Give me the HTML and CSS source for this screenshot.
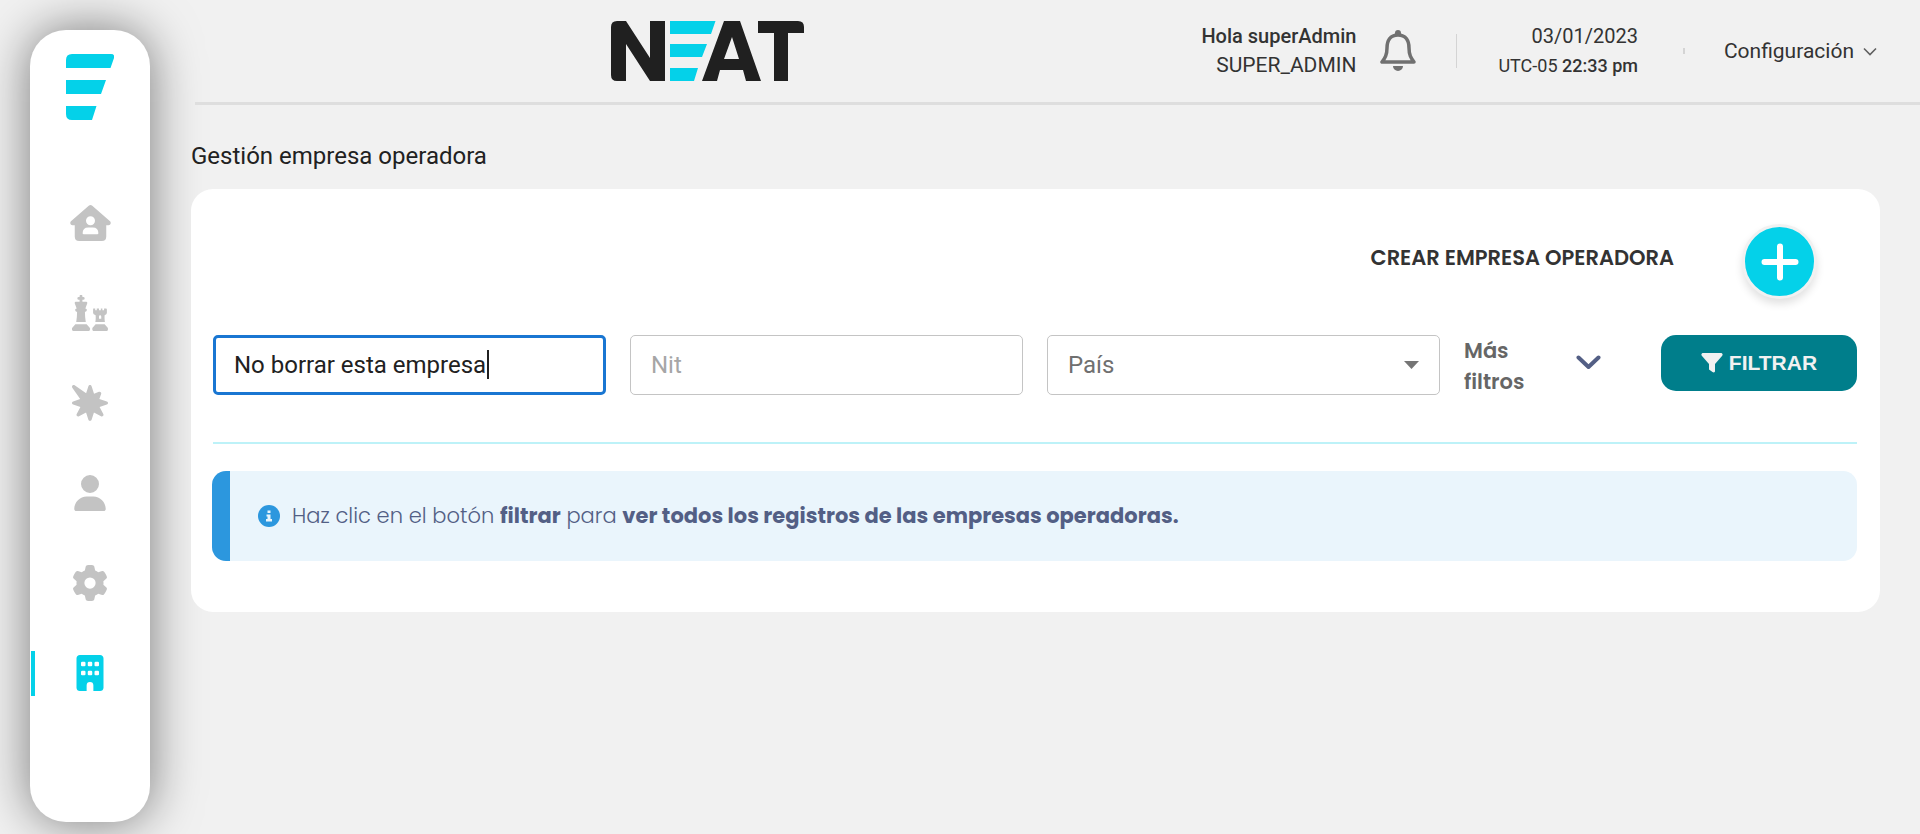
FILE: index.html
```html
<!DOCTYPE html>
<html lang="es">
<head>
<meta charset="utf-8">
<meta name="viewport" content="width=device-width, initial-scale=1">
<title>NEAT - Gestión empresa operadora</title>
<link rel="stylesheet" href="styles.css">
</head>
<body>
<div class="app">
  <aside class="sidebar">
    <a class="sidebar-logo" href="#" aria-label="Inicio">
      <svg width="48" height="66" viewBox="0 0 48 66" fill="currentColor"><path d="M6 0H45Q49 0 48 4L44.500 14H0V6Q0 0 6 0ZM0 26H40L35 40H0ZM0 52H30.500L26 66H6Q0 66 0 60Z"/></svg>
    </a>
    <nav class="menu" aria-label="Principal">
      <a class="menu-item" href="#" aria-label="Casa">
        <svg width="41" height="36" viewBox="0 0 576 512" fill="currentColor" fill-rule="evenodd"><path d="M309 8Q288-8 267 8L10 231C-10 252 2 287 32 287H64V448Q64 512 128 512H448Q512 512 512 448V287H544C574 287 586 252 566 231ZM288 160A64 64 0 1 1 288 288A64 64 0 1 1 288 160ZM176 400Q176 320 256 320H320Q400 320 400 400Q400 416 384 416H192Q176 416 176 400Z"/></svg>
      </a>
      <a class="menu-item" href="#" aria-label="Estrategia">
        <svg width="36" height="36" viewBox="0 0 512 512" fill="currentColor" fill-rule="evenodd"><path d="M148 16A20 20 0 0 0 108 16V28H96A20 20 0 0 0 96 68H108V96H54Q34 98 40 120L66 192Q44 194 44 214Q46 236 72 240Q72 310 60 384H196Q184 310 184 240Q210 236 212 214Q212 194 190 192L216 120Q222 98 202 96H148V68H160A20 20 0 0 0 160 28H148ZM48 416H208L252 464Q264 484 252 500Q246 512 232 512H24Q10 512 4 500Q-8 484 4 464ZM304 192H330V216H352V192H384V216H410V192H432V216H456V192H484Q496 192 496 208V256Q496 276 464 288Q460 336 468 384H332Q340 336 336 288Q300 276 300 256V208Q300 192 304 192ZM384 336H416V304A16 16 0 0 0 384 304ZM336 416H464L508 464Q516 484 508 500Q502 512 488 512H312Q298 512 292 500Q284 484 292 464Z"/></svg>
      </a>
      <a class="menu-item" href="#" aria-label="Novedades">
        <svg width="36" height="36" viewBox="0 0 512 512" fill="currentColor"><path d="M37.600 4.200C28-2.300 15.200-1.100 7 7s-9.400 21-2.800 30.500l112 163.300L16.600 233.200C6.700 236.400 0 245.600 0 256s6.700 19.600 16.600 22.800l103.100 33.400L66.800 412.800c-4.900 9.300-3.200 20.700 4.300 28.100s18.800 9.200 28.100 4.300l100.600-52.900 33.400 103.100c3.200 9.900 12.400 16.600 22.800 16.600s19.600-6.700 22.800-16.600l33.400-103.100 100.600 52.900c9.300 4.900 20.700 3.200 28.100-4.300s9.200-18.800 4.300-28.100L392.300 312.200l103.100-33.400c9.900-3.200 16.600-12.400 16.600-22.800s-6.700-19.600-16.600-22.800L388.900 198.700l25.700-70.400c3.200-8.800 1-18.600-5.600-25.200s-16.400-8.800-25.200-5.600l-70.400 25.700L278.800 16.600C275.600 6.700 266.400 0 256 0s-19.600 6.700-22.800 16.600l-32.300 99.600L37.600 4.200z"/></svg>
      </a>
      <a class="menu-item" href="#" aria-label="Usuarios">
        <svg width="32" height="36" viewBox="0 0 448 512" fill="currentColor"><path d="M224 256A128 128 0 1 0 224 0a128 128 0 1 0 0 256zm-45.700 48C79.800 304 0 383.800 0 482.300C0 498.700 13.300 512 29.700 512H418.300c16.400 0 29.700-13.300 29.700-29.700C448 383.800 368.200 304 269.700 304H178.300z"/></svg>
      </a>
      <a class="menu-item" href="#" aria-label="Ajustes">
        <svg width="36" height="36" viewBox="0 0 512 512" fill="currentColor"><path d="M495.900 166.600c3.200 8.700 .5 18.400-6.400 24.600l-43.300 39.400c1.100 8.300 1.700 16.800 1.700 25.400s-.6 17.100-1.700 25.400l43.300 39.400c6.900 6.200 9.600 15.900 6.400 24.600c-4.400 11.900-9.700 23.300-15.800 34.300l-4.700 8.100c-6.600 11-14 21.400-22.100 31.200c-5.900 7.200-15.700 9.600-24.500 6.800l-55.700-17.700c-13.400 10.300-28.200 18.900-44 25.400l-12.500 57.100c-2 9.100-9 16.300-18.200 17.800c-13.800 2.300-28 3.500-42.500 3.500s-28.700-1.200-42.500-3.500c-9.200-1.500-16.200-8.700-18.200-17.800l-12.500-57.100c-15.800-6.500-30.600-15.100-44-25.400L83.100 425.900c-8.800 2.800-18.600 .3-24.500-6.800c-8.100-9.800-15.500-20.200-22.100-31.200l-4.700-8.100c-6.100-11-11.400-22.400-15.800-34.300c-3.200-8.700-.5-18.400 6.400-24.600l43.300-39.400C64.600 273.100 64 264.600 64 256s.6-17.100 1.700-25.400L22.400 191.200c-6.900-6.200-9.600-15.900-6.400-24.600c4.400-11.900 9.700-23.300 15.800-34.300l4.700-8.100c6.600-11 14-21.400 22.100-31.200c5.900-7.200 15.700-9.600 24.500-6.800l55.700 17.700c13.400-10.300 28.200-18.900 44-25.400l12.500-57.100c2-9.100 9-16.300 18.200-17.800C227.300 1.200 241.500 0 256 0s28.700 1.200 42.500 3.500c9.200 1.500 16.200 8.700 18.200 17.800l12.500 57.100c15.800 6.500 30.600 15.100 44 25.400l55.700-17.700c8.800-2.800 18.600-.3 24.500 6.800c8.100 9.800 15.500 20.200 22.100 31.200l4.700 8.100c6.100 11 11.400 22.400 15.800 34.300zM256 336a80 80 0 1 0 0-160 80 80 0 1 0 0 160z"/></svg>
      </a>
      <a class="menu-item is-active" href="#" aria-label="Empresas" aria-current="page">
        <svg width="28" height="36" viewBox="0 0 384 512" fill="currentColor" fill-rule="evenodd"><path d="M48 0C21.500 0 0 21.500 0 48V464C0 490.500 21.500 512 48 512H144V432A48 48 0 0 1 240 432V512H336C362.500 512 384 490.500 384 464V48C384 21.500 362.500 0 336 0ZM80 96H112Q128 96 128 112V144Q128 160 112 160H80Q64 160 64 144V112Q64 96 80 96ZM176 96H208Q224 96 224 112V144Q224 160 208 160H176Q160 160 160 144V112Q160 96 176 96ZM272 96H304Q320 96 320 112V144Q320 160 304 160H272Q256 160 256 144V112Q256 96 272 96ZM80 224H112Q128 224 128 240V272Q128 288 112 288H80Q64 288 64 272V240Q64 224 80 224ZM176 224H208Q224 224 224 240V272Q224 288 208 288H176Q160 288 160 272V240Q160 224 176 224ZM272 224H304Q320 224 320 240V272Q320 288 304 288H272Q256 288 256 272V240Q256 224 272 224Z"/></svg>
      </a>
    </nav>
  </aside>

  <div class="page">
    <header class="topbar">
      <svg class="brand" width="193" height="60" viewBox="0 0 193 60" role="img" aria-label="NEAT">
        <g fill="#202020">
          <path d="M6 0H15L39 37V0H54V60H39L15 23V60H6Q0 60 0 54V6Q0 0 6 0Z"/>
          <path d="M113 0H129L150 60H135L132 49H109L106 60H91ZM121 16L113 38H128Z" fill-rule="evenodd"/>
          <path d="M147 0H187Q193 0 193 6V12H177V60H163V12H147Z"/>
        </g>
        <path fill="#04d1e9" d="M59 0H104.500L100 13H59ZM59 23H96L91 36H59ZM59 47H87L83 60H59Z"/>
      </svg>
      <div class="user">
        <div class="stack">
          <strong>Hola superAdmin</strong>
          <span class="role">SUPER_ADMIN</span>
        </div>
        <button class="bell" type="button" aria-label="Notificaciones">
          <svg width="36" height="42" viewBox="0 0 36 42"><path d="M18 5C10 5 7 11 7 18C7 25 5 28 2 32H34C31 28 29 25 29 18C29 11 26 5 18 5Z" fill="none" stroke="#707070" stroke-width="3.500" stroke-linejoin="round"/><path d="M15 5V3A3 3 0 0 1 21 3V5ZM13 36H23A5 5 0 0 1 13 36Z" fill="#707070"/></svg>
        </button>
      </div>
      <div class="clock stack">
        <span>03/01/2023</span>
        <span class="time">UTC-05 <strong>22:33 pm</strong></span>
      </div>
      <button class="settings" type="button">Configuración
        <svg width="14" height="9" viewBox="0 0 14 9" fill="none" stroke="#606060" stroke-width="1.600"><path d="M1 1.500L7 7.500L13 1.500"/></svg>
      </button>
    </header>

    <main class="content">
      <h1 class="title">Gestión empresa operadora</h1>
      <section class="card">
        <div class="create">
          <span id="create-label">CREAR EMPRESA OPERADORA</span>
          <button class="add" type="button" aria-labelledby="create-label">
            <svg width="38" height="38" viewBox="0 0 38 38" stroke="#fff" stroke-width="6" stroke-linecap="round"><path d="M19 3.500V34.500M3.500 19H34.500"/></svg>
          </button>
        </div>
        <form class="filters">
          <input class="field" type="text" aria-label="Nombre" value="No borrar esta empresa" autofocus>
          <input class="field" type="text" aria-label="Nit" placeholder="Nit">
          <select class="field select" aria-label="País"><option>País</option></select>
          <button class="more" type="button"><span>Más filtros</span>
            <svg width="25" height="15" viewBox="0 0 25 15" fill="none" stroke="#535f85" stroke-width="4" stroke-linecap="round" stroke-linejoin="round"><path d="M2.500 2.500L12.500 12L22.500 2.500"/></svg>
          </button>
          <button class="apply" type="button">
            <svg width="22" height="20" viewBox="0 0 22 20" fill="currentColor"><path d="M1.500 0H20.500Q22.500 1 21 3L14 11V18.500Q13 20 11.500 19L8 16.500V11L1 3Q-.5 1 1.500 0Z"/></svg>FILTRAR
          </button>
        </form>
        <div class="notice" role="status">
          <svg width="22" height="22" viewBox="0 0 22 22"><circle cx="11" cy="11" r="11" fill="#2c97de"/><path d="M9.500 5.500H12.500V8H9.500ZM8.500 9.500H12.500V14H14V16.500H8V14H9.500V11.500H8.500Z" fill="#eaf5fc"/></svg>
          <p>Haz clic en el botón <strong>filtrar</strong> para <strong>ver todos los registros de las empresas operadoras.</strong></p>
        </div>
      </section>
    </main>
  </div>
</div>
</body>
</html>
```
FILE: styles.css
```css
* { box-sizing: border-box; }
body {
  margin: 0;
  background: #f1f1f1;
  color: #333;
  font-family: Roboto, "Liberation Sans", sans-serif;
  font-size: 20px;
}
button { padding: 0; border: 0; background: none; font: inherit; color: inherit; cursor: pointer; }
svg { display: block; flex: none; }

.app { display: flex; min-height: 100vh; }

/* Sidebar */
.sidebar {
  flex: none;
  width: 120px;
  margin: 30px 41px 12px 30px;
  padding-top: 24px;
  background: #fff;
  border-radius: 36px;
  box-shadow: 0 0 50px rgba(0, 0, 0, .5);
}
.sidebar-logo { display: block; margin-left: 36px; color: #04d1e9; }
.menu { display: flex; flex-direction: column; gap: 45px; margin-top: 81px; padding: 0 1px; }
.menu-item {
  display: flex;
  align-items: center;
  justify-content: center;
  height: 45px;
  padding-bottom: 1px;
  color: #c3c3c3;
  border: 0 solid transparent;
  border-width: 0 4px;
}
.menu-item.is-active { color: #04d1e9; border-left-color: #04d1e9; }

/* Header */
.page { flex: 1; min-width: 0; }
.topbar {
  display: flex;
  align-items: center;
  height: 105px;
  margin-left: 4px;
  padding-right: 43px;
  border-bottom: 3px solid #dedede;
}
.brand { margin: 0 auto 0 416px; }
.stack { display: flex; flex-direction: column; line-height: 29px; text-align: right; }
.stack strong { font-weight: 500; }
.role { font-size: 21px; }
.user { display: flex; align-items: center; gap: 24px; padding-right: 40px; }
.clock { position: relative; padding: 0 47px 0 42px; }
.clock::before, .clock::after { content: ""; position: absolute; top: 50%; transform: translateY(-50%); background: #d4d4d4; }
.clock::before { left: 0; width: 1px; height: 34px; }
.clock::after { right: 0; width: 2px; height: 6px; }
.time { font-size: 18px; }
.settings { display: flex; align-items: center; gap: 9px; padding-left: 39px; font-size: 21px; }

/* Content */
.content { padding: 34px 40px 40px 0; }
.title { margin: 0 0 16px; font-size: 24px; font-weight: 400; line-height: 34px; color: #212121; }
.card { padding: 35px 23px 51px 22px; background: #fff; border-radius: 22px; }
.create { display: flex; align-items: center; justify-content: flex-end; gap: 68px; padding-right: 40px; font: 600 21px/30px Poppins, Inter, sans-serif; }
.create span { padding-bottom: 8px; }
.add {
  display: grid;
  place-items: center;
  width: 75px;
  height: 75px;
  background: #04d1e9;
  border: 3px solid #f1f1f1;
  border-radius: 50%;
  box-shadow: 0 5px 8px rgba(0, 0, 0, .12);
}
.filters {
  display: grid;
  grid-template-columns: repeat(3, 1fr) 173px 196px;
  align-items: start;
  gap: 24px;
  margin-top: 36px;
  padding-bottom: 45px;
  border-bottom: 2px solid #bdf2f8;
}
.field {
  width: 100%;
  min-width: 0;
  height: 60px;
  padding: 0 20px;
  border: 1px solid #c4c4c4;
  border-radius: 5px;
  background: #fff;
  color: #212121;
  font: 24px/34px Roboto, sans-serif;
}
.field::placeholder { color: #a6a6a6; opacity: 1; }
.field:focus { padding: 0 18px; border: 3px solid #1976d2; outline: 0; }
/* Thick two-pixel caret at the end of the value */
.field[autofocus]:focus {
  caret-color: transparent;
  background: #fff linear-gradient(#212121, #212121) no-repeat 271px 12px / 2px 29px;
}
.select {
  appearance: none;
  color: #707070;
  background: #fff url("data:image/svg+xml,%3Csvg xmlns='http://www.w3.org/2000/svg' width='15' height='8'%3E%3Cpath fill='%23757575' d='M0 0H15L7.500 8Z'/%3E%3C/svg%3E") no-repeat right 20px center;
}
.more { display: flex; align-items: flex-start; justify-content: space-between; padding-right: 36px; text-align: left; color: #666; font: 600 21px/31px Poppins, Inter, sans-serif; }
.more span { width: 64px; }
.more svg { margin-top: 20px; }
.apply {
  display: flex;
  align-items: center;
  justify-content: center;
  gap: 6px;
  height: 56px;
  background: #007e8b;
  border-radius: 15px;
  color: #f1f1f1;
  font: 700 21px/30px "Liberation Sans", Arial, sans-serif;
}
.notice {
  display: flex;
  align-items: center;
  gap: 12px;
  min-height: 90px;
  margin: 27px 0 0 -1px;
  padding: 0 28px;
  border-left: 18px solid #2c97de;
  border-radius: 14px;
  background: #eaf5fc;
  color: #535f85;
  font: 300 21px/30px Poppins, Inter, sans-serif;
}
.notice p { margin: 0; }
.notice strong { font-weight: 700; }
```
